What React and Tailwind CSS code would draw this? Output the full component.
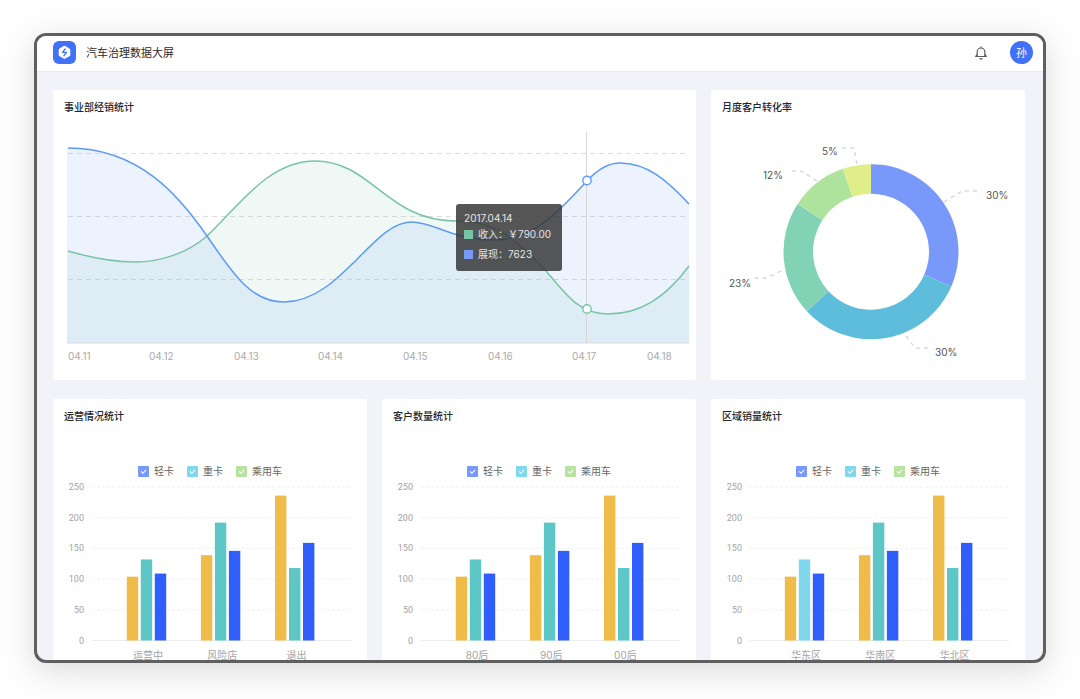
import { useState } from 'react';

/* ======================
   data
====================== */
const GRID_Y = [24, 87, 150];

const DATES = [
  { label: '04.11', x: 15 },
  { label: '04.12', x: 96 },
  { label: '04.13', x: 181 },
  { label: '04.14', x: 265 },
  { label: '04.15', x: 350 },
  { label: '04.16', x: 435 },
  { label: '04.17', x: 519 },
  { label: '04.18', x: 594 },
];

const SHOW_PATH =
  'M15 18C87 18 127 67 154 106C179 142 197 172 231 172C287 172 320 92 358 92C382 92 399 110 440 110C482 110 507 80 534 51C545 39 555 33 567 33C593 33 613 49 636 74';
const INCOME_PATH =
  'M15 121C39 128 59 132 82 132C107 132 135 123 154 106C185 77 215 31 262 31C319 31 333 91 403 91C443 91 462 108 494 142C514 166 527 184 555 184C588 184 613 167 636 136';

const SLICES = [
  { label: '30%', from: 0, to: 113.4, color: '#7898fa', line: '233,72 251,61 269,61', x: 275, y: 69 },
  { label: '30%', from: 113.4, to: 227.1, color: '#5dbdda', line: '195,206 204,218 217,218', x: 224, y: 226 },
  { label: '23%', from: 227.1, to: 303, color: '#82d3b5', line: '70,141 55,148 40,148', x: 18, y: 157 },
  { label: '12%', from: 303, to: 341.3, color: '#aee39d', line: '106,51 90,41 77,41', x: 52, y: 49 },
  { label: '5%', from: 341.3, to: 360, color: '#dfee89', line: '146,34 143,18 130,18', x: 111, y: 25 },
];

const LEGEND = [
  { label: '轻卡', box: 'bg-[#7898fa]' },
  { label: '重卡', box: 'bg-[#7fd8ec]' },
  { label: '乘用车', box: 'bg-[#b8e2a0]' },
];

const VALUES = [
  [104, 132, 109],
  [139, 192, 146],
  [236, 118, 159],
];
const BAR_COLORS = ['#efbb49', '#5dc7c8', '#2f5efb'];

/* ======================
   utils
====================== */
function polar(cx, cy, r, deg) {
  const a = ((deg - 90) * Math.PI) / 180;
  return `${(cx + r * Math.cos(a)).toFixed(2)} ${(cy + r * Math.sin(a)).toFixed(2)}`;
}

function ringPath(cx, cy, outer, inner, from, to) {
  return [
    `M${polar(cx, cy, outer, from)}`,
    `A${outer} ${outer} 0 0 1 ${polar(cx, cy, outer, to)}`,
    `L${polar(cx, cy, inner, to)}`,
    `A${inner} ${inner} 0 0 0 ${polar(cx, cy, inner, from)}Z`,
  ].join('');
}

const valueToY = (v) => 160.5 - (v / 250) * 153.5;

/* ======================
   header
====================== */
function Header() {
  return (
    <header className="flex h-9 shrink-0 items-center justify-between border-b border-[#e9ebf0] bg-white pr-[10px] pb-0.5 pl-4">
      <div className="flex items-center gap-[10px]">
        <svg viewBox="0 0 23 23" className="size-[23px]" aria-hidden="true">
          <rect width="23" height="23" rx="6" fill="#4171f7" />
          <path
            d="M10.6 5.100a1.800 1.800 0 0 1 1.800 0l4 2.300a1.800 1.800 0 0 1 .9 1.500v4.900a1.800 1.800 0 0 1-.9 1.500l-4 2.300a1.800 1.800 0 0 1-1.800 0l-4-2.300a1.800 1.800 0 0 1-.9-1.500V8.900a1.800 1.800 0 0 1 .9-1.500z"
            fill="#fff"
          />
          <path
            d="M12.200 8 9.500 11.300h4L10.800 14.800"
            fill="none"
            stroke="#4171f7"
            strokeWidth="1.3"
            strokeLinecap="round"
            strokeLinejoin="round"
          />
        </svg>
        <h1 className="text-[11px] leading-4 text-[#2b2b2b]">汽车治理数据大屏</h1>
      </div>

      <div className="flex items-center gap-[22px]">
        <button type="button" aria-label="通知" className="cursor-pointer">
          <svg
            viewBox="0 0 14 14"
            className="size-[14px]"
            fill="none"
            stroke="#5c5c5c"
            strokeWidth="1.2"
            strokeLinecap="round"
            strokeLinejoin="round"
            aria-hidden="true"
          >
            <path d="M7 .8v1M3.200 10.500V5.800a3.800 3.800 0 0 1 7.600 0v4.700M10.800 8l1.500 2.500H1.700L3.200 8M5.900 12.500a1.300 1.300 0 0 0 2.200 0" />
          </svg>
        </button>
        <button
          type="button"
          className="flex size-[23px] cursor-pointer items-center justify-center rounded-full bg-[#4171f7] text-[11px] leading-4 text-white"
        >
          孙
        </button>
      </div>
    </header>
  );
}

function Card({ title, className = '', children }) {
  return (
    <section className={`rounded-xs bg-white ${className}`}>
      <h2 className="h-10 px-[11px] pt-2 text-[10px] leading-[18px] font-medium text-[#23262b]">
        {title}
      </h2>
      {children}
    </section>
  );
}

/* ======================
   line chart
====================== */
function SalesChart() {
  return (
    <div className="relative">
      <svg viewBox="0 0 643 250" className="block w-full" role="img" aria-label="事业部经销统计">
        {GRID_Y.map((y) => (
          <path key={y} d={`M15 ${y - 0.5}H636`} stroke="#dedede" strokeDasharray="5 4" />
        ))}
        <path d={`${INCOME_PATH}V213H14V121Z`} fill="#82c5b4" fillOpacity="0.12" />
        <path d={`${SHOW_PATH}V213H14V18Z`} fill="#619bf7" fillOpacity="0.12" />
        <path d="M14 213H636" stroke="#d9dcdf" />
        <path d="M533.5 2V213" stroke="#d6d6d6" />
        <path d={INCOME_PATH} fill="none" stroke="#78c4a4" strokeWidth="1.5" />
        <path d={SHOW_PATH} fill="none" stroke="#5b9af8" strokeWidth="1.5" />
        <circle cx="534" cy="50.5" r="4.2" fill="#fff" stroke="#5b9af8" strokeWidth="1.4" />
        <circle cx="534" cy="179" r="4.2" fill="#fff" stroke="#78c4a4" strokeWidth="1.4" />
        <g fill="#aaaaaa" className="text-[10px]">
          {DATES.map((d) => (
            <text key={d.label} x={d.x} y="230">
              {d.label}
            </text>
          ))}
        </g>
      </svg>

      {/* tooltip */}
      <div className="absolute top-[30%] left-[63%] -mt-px -ml-0.5 rounded-[3px] bg-[#383838]/85 pt-1.5 pr-[11px] pb-[9px] pl-2 text-[10px] leading-4 text-[#e6e6e6]">
        <p>2017.04.14</p>
        <p className="flex items-center gap-[5px]">
          <span className="size-[9px] bg-[#78c4a4]" />
          <span>收入：￥790.00</span>
        </p>
        <p className="mt-1 flex items-center gap-[5px]">
          <span className="size-[9px] bg-[#7898fa]" />
          <span>展现：7623</span>
        </p>
      </div>
    </div>
  );
}

/* ======================
   donut chart
====================== */
function ConversionChart() {
  return (
    <svg viewBox="0 0 314 250" className="block w-full" role="img" aria-label="月度客户转化率">
      {SLICES.map((s) => (
        <g key={s.from}>
          <path d={ringPath(160, 121.7, 87.5, 58, s.from, s.to)} fill={s.color} />
          <polyline points={s.line} fill="none" stroke="#dadada" strokeWidth="1.5" strokeDasharray="4 4" />
          <text x={s.x} y={s.y} fill="#555" className="text-[10px]">
            {s.label}
          </text>
        </g>
      ))}
    </svg>
  );
}

/* ======================
   bar chart
====================== */
function Legend() {
  const [checked, setChecked] = useState([true, true, true]);

  return (
    <div className="mt-6 mb-px flex h-4 items-center justify-center gap-[13px]">
      {LEGEND.map((item, i) => (
        <label key={item.label} className="flex cursor-pointer items-center gap-[5px] text-[10px] leading-4 text-[#666]">
          <span className="relative flex size-[11px]">
            <input
              type="checkbox"
              checked={checked[i]}
              onChange={() => setChecked((prev) => prev.map((v, n) => (n === i ? !v : v)))}
              className={`size-[11px] appearance-none rounded-[1px] ${item.box}`}
            />
            {checked[i] && (
              <svg
                viewBox="0 0 11 11"
                className="pointer-events-none absolute inset-0"
                fill="none"
                stroke="#fff"
                strokeWidth="1.1"
                aria-hidden="true"
              >
                <path d="m3 5.400 1.900 1.900L8.100 3.900" />
              </svg>
            )}
          </span>
          {item.label}
        </label>
      ))}
    </div>
  );
}

function BarChart({ title, groups, highlight }) {
  return (
    <Card title={title}>
      <Legend />
      <svg viewBox="0 0 314 200" className="block w-full" role="img" aria-label={title}>
        {[250, 200, 150, 100, 50, 0].map((v) => (
          <g key={v}>
            <path
              d={`M39 ${valueToY(v)}H298`}
              stroke={v === 0 ? '#ececec' : '#f1f1f1'}
              strokeDasharray={v === 0 ? undefined : '3 2'}
            />
            <text
              x="31"
              y={valueToY(v) + 3}
              textAnchor="end"
              fill="#a3a3a3"
              className="font-['Roboto',sans-serif] text-[9px]"
            >
              {v}
            </text>
          </g>
        ))}
        {groups.map((name, g) => (
          <g key={name}>
            <path d={`M${95 + g * 74.2} 161v2`} stroke="#ececec" />
            {VALUES[g].map((v, i) => (
              <rect
                key={i}
                x={73.8 + g * 74.1 + i * 14}
                y={valueToY(v)}
                width="11.4"
                height={160.5 - valueToY(v)}
                fill={highlight && g === 0 && i === 1 ? '#7fd8ec' : BAR_COLORS[i]}
              />
            ))}
            <text
              x={95 + g * 74.2}
              y="179"
              textAnchor="middle"
              fill="#a3a3a3"
              className="text-[10px]"
            >
              {name}
            </text>
          </g>
        ))}
      </svg>
    </Card>
  );
}

export default function App() {
  return (
    <div className="flex h-screen flex-col bg-[#fefefe] px-[34px] pt-[33px] pb-9 font-[Inter,'Noto_Sans_CJK_SC',sans-serif]">
      <div className="flex min-h-0 flex-1 flex-col overflow-hidden rounded-xl border-3 border-[#5f5f5f] bg-[#f2f3f8] shadow-[0_8px_32px_rgba(0,0,0,0.14)]">
        <Header />
        <main className="grid min-h-0 flex-1 grid-cols-3 content-start gap-x-[15px] gap-y-[19px] overflow-hidden pt-[18px] pr-[18px] pl-4">
          <Card title="事业部经销统计" className="col-span-2">
            <SalesChart />
          </Card>
          <Card title="月度客户转化率">
            <ConversionChart />
          </Card>
          <BarChart title="运营情况统计" groups={['运营中', '风险店', '退出']} />
          <BarChart title="客户数量统计" groups={['80后', '90后', '00后']} />
          <BarChart title="区域销量统计" groups={['华东区', '华南区', '华北区']} highlight />
        </main>
      </div>
    </div>
  );
}
